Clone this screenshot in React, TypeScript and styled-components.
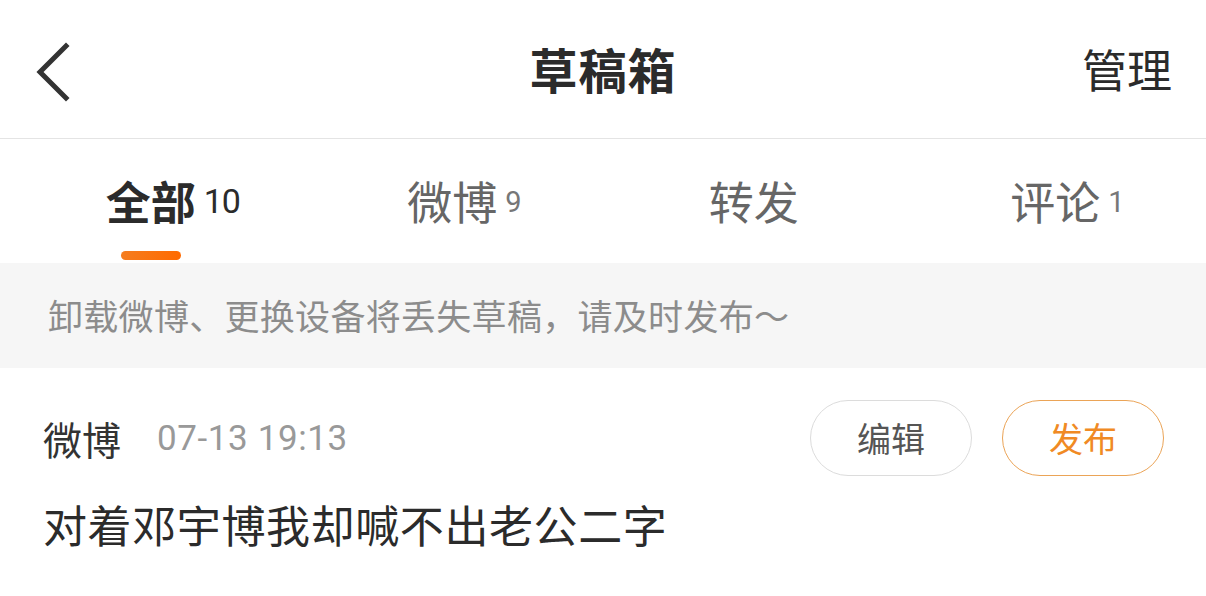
import React, { useState } from 'react';
import styled, { createGlobalStyle } from 'styled-components';

const GlobalStyle = createGlobalStyle`
  html, body {
    margin: 0;
    padding: 0;
    background: #ffffff;
  }
  body {
    font-family: 'Noto Sans CJK SC', 'Noto Sans', sans-serif;
    color: #333333;
  }
  * {
    box-sizing: border-box;
  }
`;

const Page = styled.main`
  width: 1206px;
  height: 596px;
  overflow: hidden;
  background: #ffffff;
`;

const NavBar = styled.header`
  height: 139px;
  display: grid;
  grid-template-columns: 1fr auto 1fr;
  align-items: center;
  padding: 0 34px 0 34px;
  border-bottom: 1px solid #e4e4e4;
`;

const BackButton = styled.button`
  justify-self: start;
  width: 44px;
  height: 64px;
  padding: 0;
  border: none;
  background: none;
  display: flex;
  align-items: center;
  margin-top: 6px;
`;

const Title = styled.h1`
  margin: 0 0 2px;
  font-size: 48px;
  font-weight: 700;
  color: #2b2b2b;
  letter-spacing: 1px;
`;

const NavAction = styled.span`
  justify-self: end;
  margin-bottom: 2px;
  font-size: 45px;
  color: #2b2b2b;
`;

const Tabs = styled.nav`
  height: 124px;
  display: grid;
  grid-template-columns: repeat(4, 1fr);
`;

const Tab = styled.div`
  position: relative;
  display: flex;
  justify-content: center;
  align-items: center;
  padding-bottom: 2px;
`;

const TabLabel = styled.span<{ $active?: boolean }>`
  position: relative;
  font-size: 45px;
  font-weight: ${(p) => (p.$active ? 700 : 400)};
  color: ${(p) => (p.$active ? '#2b2b2b' : '#666666')};
  line-height: 1;
`;

const TabCount = styled.sup<{ $active?: boolean }>`
  position: absolute;
  left: 100%;
  top: ${(p) => (p.$active ? '6px' : '10px')};
  margin-left: 8px;
  font-family: 'Roboto', 'Noto Sans', sans-serif;
  font-size: ${(p) => (p.$active ? '34px' : '29px')};
  font-weight: 400;
  color: ${(p) => (p.$active ? '#2b2b2b' : '#777777')};
  line-height: 1;
  letter-spacing: -1px;
`;

const Indicator = styled.span`
  position: absolute;
  bottom: 3px;
  left: 50%;
  width: 60px;
  height: 9px;
  margin-left: -30px;
  border-radius: 5px;
  background: linear-gradient(90deg, #f57d1f, #ff6a00);
`;

const Notice = styled.div`
  height: 105px;
  display: flex;
  align-items: center;
  padding: 0 48px 2px;
  background: #f6f6f6;
  font-size: 35px;
  color: #8c8c8c;
  letter-spacing: 0.3px;
`;

const Draft = styled.article`
  padding: 32px 42px 0 43px;
`;

const DraftHead = styled.div`
  display: flex;
  align-items: center;
  height: 76px;
`;

const DraftType = styled.span`
  font-size: 39px;
  color: #333333;
`;

const DraftTime = styled.span`
  margin-left: 36px;
  font-size: 35px;
  color: #999999;
  font-family: 'Roboto', 'Noto Sans', sans-serif;
  letter-spacing: 0.6px;
`;

const Actions = styled.div`
  margin-left: auto;
  display: flex;
  gap: 30px;
`;

const PillButton = styled.button<{ $primary?: boolean }>`
  width: 162px;
  height: 76px;
  border-radius: 38px;
  background: #ffffff;
  border: 1.5px solid ${(p) => (p.$primary ? '#eba457' : '#dcdcdc')};
  color: ${(p) => (p.$primary ? '#f08a24' : '#555555')};
  font-family: 'Noto Sans CJK SC', sans-serif;
  font-size: 34px;
  display: flex;
  align-items: center;
  justify-content: center;
  padding: 0 0 2px;
`;

const DraftText = styled.p`
  margin: 22px 0 0;
  font-size: 44px;
  color: #2b2b2b;
  line-height: 1.2;
  letter-spacing: 0.6px;
`;

const ChevronLeft = () => (
  <svg width="40" height="62" viewBox="0 0 40 62" fill="none">
    <path d="M32 5 L6 31 L32 57" stroke="#333333" strokeWidth="5" strokeLinecap="square" />
  </svg>
);

const tabs = [
  { label: '全部', count: 10 },
  { label: '微博', count: 9 },
  { label: '转发' },
  { label: '评论', count: 1 },
];

export default function App() {
  const [active, setActive] = useState(0);
  return (
    <>
      <GlobalStyle />
      <Page>
        <NavBar>
          <BackButton aria-label="返回">
            <ChevronLeft />
          </BackButton>
          <Title>草稿箱</Title>
          <NavAction>管理</NavAction>
        </NavBar>
        <Tabs>
          {tabs.map((t, i) => (
            <Tab key={t.label} onClick={() => setActive(i)}>
              <TabLabel $active={i === active}>
                {t.label}
                {t.count !== undefined && <TabCount $active={i === active}>{t.count}</TabCount>}
              </TabLabel>
              {i === active && <Indicator />}
            </Tab>
          ))}
        </Tabs>
        <Notice>卸载微博、更换设备将丢失草稿，请及时发布～</Notice>
        <Draft>
          <DraftHead>
            <DraftType>微博</DraftType>
            <DraftTime>07-13 19:13</DraftTime>
            <Actions>
              <PillButton>编辑</PillButton>
              <PillButton $primary>发布</PillButton>
            </Actions>
          </DraftHead>
          <DraftText>对着邓宇博我却喊不出老公二字</DraftText>
        </Draft>
      </Page>
    </>
  );
}
